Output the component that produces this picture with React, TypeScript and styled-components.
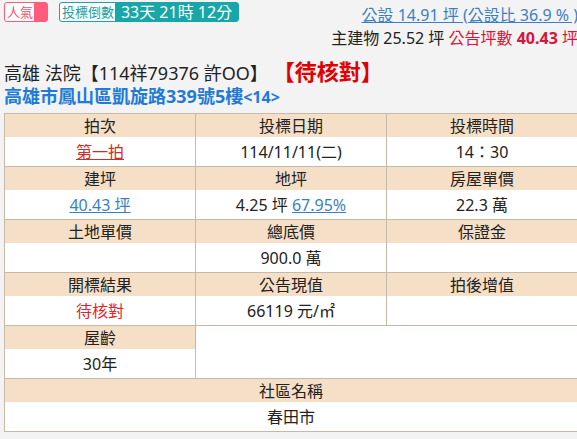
import React from "react";
import styled, { createGlobalStyle } from "styled-components";

const GlobalStyle = createGlobalStyle`
  html, body { margin: 0; padding: 0; background: #f3f3f3; overflow: hidden; }
  body { font-family: "Noto Sans", "Noto Sans CJK TC", sans-serif; color: #222; }
`;

const Page = styled.div`
  width: 590px;
  padding-left: 4px;
  box-sizing: border-box;
`;

const TopBar = styled.div`
  display: flex;
  justify-content: space-between;
  align-items: flex-start;
  width: 574px;
`;

const Badges = styled.div`
  display: flex;
  gap: 11px;
  padding-top: 2px;
`;

const Badge = styled.span<{ $color: string }>`
  display: inline-flex;
  height: 20px;
  box-sizing: border-box;
  border: 1px solid ${(p) => p.$color};
  border-radius: 3px;
  overflow: hidden;
  background: ${(p) => p.$color};
`;

const BadgeLabel = styled.span<{ $color: string }>`
  background: #fff;
  color: ${(p) => p.$color};
  font-size: 13px;
  line-height: 18px;
  padding: 0 1px 0 2px;
`;

const BadgeValue = styled.span<{ $width: number }>`
  width: ${(p) => p.$width}px;
  color: #fff;
  font-size: 16px;
  line-height: 18px;
  text-align: center;
  white-space: nowrap;
`;

const Info = styled.div`
  text-align: right;
  font-size: 16px;
  line-height: 23px;
  padding-top: 4px;
  white-space: nowrap;
  color: #222;
`;

const InfoLink = styled.a`
  color: #3a7fc6;
  text-decoration: underline;
`;

const Accent = styled.span<{ $bold?: boolean }>`
  color: #d4163c;
  font-weight: ${(p) => (p.$bold ? "bold" : "normal")};
`;

const Title = styled.h1`
  margin: 10px 0 0;
  font-size: 18px;
  font-weight: normal;
  line-height: 23px;
  color: #222;
  white-space: nowrap;
`;

const Pending = styled.span`
  color: #e00000;
  font-weight: bold;
  font-size: 22px;
  margin-left: 16px;
`;

const Address = styled.h2`
  margin: 0;
  font-size: 18px;
  font-weight: bold;
  line-height: 23px;
  color: #1f7bd6;
  white-space: nowrap;
`;

const Floor = styled.span`
  font-size: 16px;
`;

const Table = styled.table`
  margin-top: 4px;
  border-collapse: collapse;
  table-layout: fixed;
  width: 574px;
  background: #fff;
`;

const line = "#c6b9a7";

const HeadCell = styled.th<{ $blank?: boolean }>`
  background: ${(p) => (p.$blank ? "#fff" : "#f5dfc7")};
  font-weight: normal;
  font-size: 16px;
  line-height: 22px;
  height: 23px;
  padding: 0;
  color: #222;
  text-align: center;
  border-top: 1px solid ${line};
  border-left: 1px solid ${line};
  border-right: 1px solid ${line};
  border-bottom: none;
`;

const ValueCell = styled.td<{ $tone?: "red" | "blue" }>`
  background: #fff;
  font-size: 16px;
  line-height: 22px;
  height: 29px;
  padding: 0;
  text-align: center;
  color: ${(p) => (p.$tone === "red" ? "#e0262a" : "#222")};
  border-top: none;
  border-left: 1px solid ${line};
  border-right: 1px solid ${line};
  border-bottom: 1px solid ${line};
`;

const CellLink = styled.a<{ $tone: "red" | "blue" }>`
  color: ${(p) => (p.$tone === "red" ? "#d42a2a" : "#3a7fc6")};
  text-decoration: underline;
`;

export default function App() {
  return (
    <>
      <GlobalStyle />
      <Page>
        <TopBar>
          <Badges>
            <Badge $color="#ff5b7b">
              <BadgeLabel $color="#e9566f">人氣</BadgeLabel>
              <BadgeValue $width={13} />
            </Badge>
            <Badge $color="#17a7a8">
              <BadgeLabel $color="#17a0a2">投標倒數</BadgeLabel>
              <BadgeValue $width={123}>33天 21時 12分</BadgeValue>
            </Badge>
          </Badges>
          <Info>
            <div>
              <InfoLink>公設 14.91 坪 (公設比 36.9 % )</InfoLink>
            </div>
            <div>
              主建物 25.52 坪 <Accent>公告坪數 </Accent>
              <Accent $bold>40.43</Accent>
              <Accent> 坪</Accent>
            </div>
          </Info>
        </TopBar>
        <Title>
          高雄 法院【114祥79376 許OO】<Pending>【待核對】</Pending>
        </Title>
        <Address>
          高雄市鳳山區凱旋路339號5樓<Floor>&lt;14&gt;</Floor>
        </Address>
        <Table>
          <tbody>
            <tr>
              <HeadCell>拍次</HeadCell>
              <HeadCell>投標日期</HeadCell>
              <HeadCell>投標時間</HeadCell>
            </tr>
            <tr>
              <ValueCell>
                <CellLink $tone="red">第一拍</CellLink>
              </ValueCell>
              <ValueCell>114/11/11(二)</ValueCell>
              <ValueCell>14：30</ValueCell>
            </tr>
            <tr>
              <HeadCell>建坪</HeadCell>
              <HeadCell>地坪</HeadCell>
              <HeadCell>房屋單價</HeadCell>
            </tr>
            <tr>
              <ValueCell>
                <CellLink $tone="blue">40.43 坪</CellLink>
              </ValueCell>
              <ValueCell>
                4.25 坪 <CellLink $tone="blue">67.95%</CellLink>
              </ValueCell>
              <ValueCell>22.3 萬</ValueCell>
            </tr>
            <tr>
              <HeadCell>土地單價</HeadCell>
              <HeadCell>總底價</HeadCell>
              <HeadCell>保證金</HeadCell>
            </tr>
            <tr>
              <ValueCell></ValueCell>
              <ValueCell>900.0 萬</ValueCell>
              <ValueCell></ValueCell>
            </tr>
            <tr>
              <HeadCell>開標結果</HeadCell>
              <HeadCell>公告現值</HeadCell>
              <HeadCell>拍後增值</HeadCell>
            </tr>
            <tr>
              <ValueCell $tone="red">待核對</ValueCell>
              <ValueCell>66119 元/㎡</ValueCell>
              <ValueCell></ValueCell>
            </tr>
            <tr>
              <HeadCell>屋齡</HeadCell>
              <HeadCell $blank colSpan={2} />
            </tr>
            <tr>
              <ValueCell>30年</ValueCell>
              <ValueCell colSpan={2} />
            </tr>
            <tr>
              <HeadCell colSpan={3}>社區名稱</HeadCell>
            </tr>
            <tr>
              <ValueCell colSpan={3}>春田市</ValueCell>
            </tr>
          </tbody>
        </Table>
      </Page>
    </>
  );
}
